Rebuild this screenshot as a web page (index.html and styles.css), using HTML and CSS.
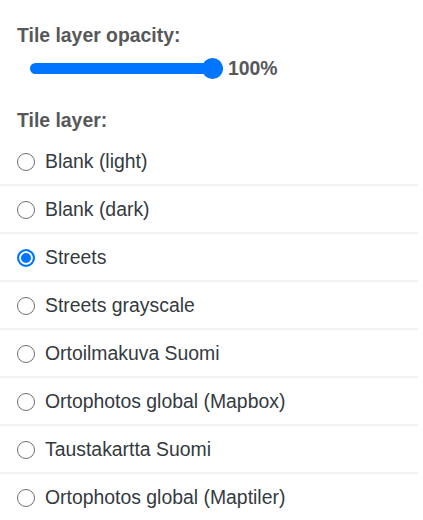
FILE: index.html
```html
<!DOCTYPE html>
<html>
<head>
<meta charset="utf-8">
<link rel="stylesheet" href="styles.css">
</head>
<body>
<div class="panel">
  <div class="title">Tile layer opacity:</div>
  <div class="slider-row">
    <input class="slider" type="range" min="0" max="100" value="100">
    <span class="value">100%</span>
  </div>
  <div class="title title-layer">Tile layer:</div>
  <ul class="list">
    <li class="item"><label><input type="radio" name="tile"><span>Blank (light)</span></label></li>
    <li class="item"><label><input type="radio" name="tile"><span>Blank (dark)</span></label></li>
    <li class="item"><label><input type="radio" name="tile" checked><span>Streets</span></label></li>
    <li class="item"><label><input type="radio" name="tile"><span>Streets grayscale</span></label></li>
    <li class="item"><label><input type="radio" name="tile"><span>Ortoilmakuva Suomi</span></label></li>
    <li class="item"><label><input type="radio" name="tile"><span>Ortophotos global (Mapbox)</span></label></li>
    <li class="item"><label><input type="radio" name="tile"><span>Taustakartta Suomi</span></label></li>
    <li class="item"><label><input type="radio" name="tile"><span>Ortophotos global (Maptiler)</span></label></li>
  </ul>
</div>
</body>
</html>
```

FILE: styles.css
```css
html, body {
  margin: 0;
  padding: 0;
  background: #fff;
}
body {
  font-family: "Liberation Sans", Arial, sans-serif;
  font-size: 19.4px;
}
.panel {
  width: 418px;
  padding-top: 24px;
}
.title {
  padding: 0 17px;
  font-weight: bold;
  color: #575859;
  line-height: 22px;
}
.slider-row {
  display: flex;
  align-items: center;
  padding-left: 30px;
  margin-top: 10px;
  height: 24px;
}
.slider {
  -webkit-appearance: none;
  appearance: none;
  margin: 0;
  width: 193px;
  height: 22px;
  background: transparent;
}
.slider::-webkit-slider-runnable-track {
  height: 11px;
  border-radius: 6px;
  background: #0075ff;
}
.slider::-webkit-slider-thumb {
  -webkit-appearance: none;
  width: 21px;
  height: 21px;
  border-radius: 50%;
  background: #0075ff;
  margin-top: -5px;
}
.value {
  margin-left: 5px;
  font-weight: bold;
  color: #575859;
}
.title-layer {
  margin-top: 29px;
}
.list {
  list-style: none;
  margin: 7px 0 0;
  padding: 0;
}
.item {
  height: 48px;
  border-bottom: 2px solid #f2f2f2;
  box-sizing: border-box;
}
.item label {
  display: flex;
  align-items: center;
  height: 100%;
  padding-left: 17px;
  padding-top: 1px;
  box-sizing: border-box;
  color: #343a40;
}
.item input {
  -webkit-appearance: none;
  appearance: none;
  margin: 0 10px 0 0;
  width: 18px;
  height: 18px;
  border: 1.5px solid #707070;
  border-radius: 50%;
  background: #fff;
  box-sizing: border-box;
  flex: none;
}
.item input:checked {
  border: 2px solid #0075ff;
  background: #0075ff;
  box-shadow: inset 0 0 0 2px #fff;
}
```
